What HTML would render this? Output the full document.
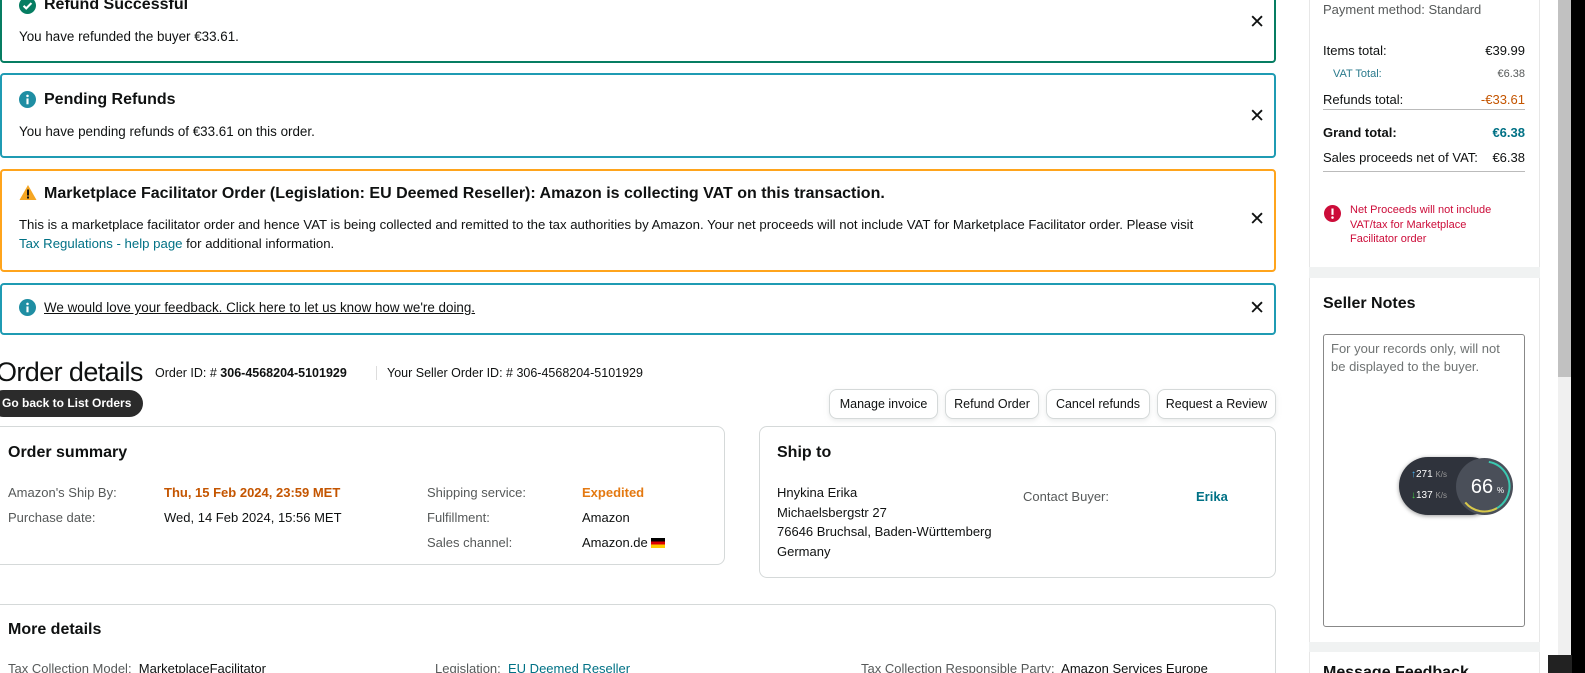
<!DOCTYPE html>
<html style="overflow:hidden;background:#000"><head><meta charset="utf-8"><style>
*{box-sizing:border-box;margin:0;padding:0}
body{width:1585px;height:673px;overflow:hidden;background:#fff;font-family:"Liberation Sans",sans-serif;color:#0f1111;font-size:13px;position:relative}
.a{position:absolute;white-space:nowrap}
.box{position:absolute;border:2px solid;border-radius:4px;background:#fff}
.x{position:absolute;right:9px;font-size:19px;color:#0f1111;line-height:1}
.h{font-weight:bold;font-size:16px}
.card{position:absolute;border:1px solid #d5d9d9;border-radius:8px;background:#fff}
.btn{position:absolute;top:389px;height:30px;border:1px solid #d5d9d9;border-radius:8px;background:#fff;font-size:12.5px;line-height:28px;text-align:center;box-shadow:0 2px 5px rgba(213,217,217,.5)}
.g{color:#565959}
.link{color:#007185}
.r{text-align:right}
.t{font-size:13.4px}
</style></head><body>

<!-- alerts -->
<div class="box" style="left:0;top:-8px;width:1276px;height:71px;border-color:#067d62">
 <svg class="a" style="left:17px;top:3px" width="17" height="17" viewBox="0 0 16 16"><circle cx="8" cy="8" r="8" fill="#067d62"/><path d="M4.3 8.3l2.5 2.4 4.9-5" stroke="#fff" stroke-width="2" fill="none"/></svg>
 <div class="a h" style="left:42px;top:2px">Refund Successful</div>
 <div class="a t" style="left:17px;top:35px">You have refunded the buyer €33.61.</div>
 <div class="x" style="top:19px">✕</div>
</div>
<div class="box" style="left:0;top:73px;width:1276px;height:85px;border-color:#1f9bb3">
 <svg class="a" style="left:17px;top:16px" width="17" height="17" viewBox="0 0 16 16"><circle cx="8" cy="8" r="8" fill="#1f8ea3"/><rect x="7" y="7" width="2" height="5.5" fill="#fff"/><circle cx="8" cy="4.6" r="1.2" fill="#fff"/></svg>
 <div class="a h" style="left:42px;top:16px">Pending Refunds</div>
 <div class="a t" style="left:17px;top:49px">You have pending refunds of €33.61 on this order.</div>
 <div class="x" style="top:32px">✕</div>
</div>
<div class="box" style="left:0;top:169px;width:1276px;height:103px;border-color:#ffa41c">
 <svg class="a" style="left:17px;top:13px" width="18" height="17" viewBox="0 0 18 16"><path d="M9 0.5L17.5 15.5H0.5Z" fill="#f5a623"/><rect x="8" y="5" width="2" height="6" fill="#111"/><rect x="8" y="12" width="2" height="2" fill="#111"/></svg>
 <div class="a h" style="left:42px;top:14px">Marketplace Facilitator Order (Legislation: EU Deemed Reseller): Amazon is collecting VAT on this transaction.</div>
 <div class="a" style="left:17px;top:46px;font-size:13.2px">This is a marketplace facilitator order and hence VAT is being collected and remitted to the tax authorities by Amazon. Your net proceeds will not include VAT for Marketplace Facilitator order. Please visit</div>
 <div class="a" style="left:17px;top:65px;font-size:13.2px"><span class="link">Tax Regulations - help page</span> for additional information.</div>
 <div class="x" style="top:39px">✕</div>
</div>
<div class="box" style="left:0;top:283px;width:1276px;height:52px;border-color:#1f9bb3">
 <svg class="a" style="left:17px;top:14px" width="17" height="17" viewBox="0 0 16 16"><circle cx="8" cy="8" r="8" fill="#1f8ea3"/><rect x="7" y="7" width="2" height="5.5" fill="#fff"/><circle cx="8" cy="4.6" r="1.2" fill="#fff"/></svg>
 <div class="a t" style="left:42px;top:15px;text-decoration:underline">We would love your feedback. Click here to let us know how we're doing.</div>
 <div class="x" style="top:14px">✕</div>
</div>

<!-- order details -->
<div class="a" style="left:-4px;top:355px;font-size:27px;line-height:34px;letter-spacing:-0.6px">Order details</div>
<div class="a" style="left:155px;top:366px;font-size:12.5px">Order ID: # <b>306-4568204-5101929</b></div>
<div class="a" style="left:376px;top:366px;height:14px;border-left:1px solid #ddd"></div>
<div class="a" style="left:387px;top:366px;font-size:12.5px">Your Seller Order ID: # 306-4568204-5101929</div>
<div class="a" style="left:-10px;top:390px;width:153px;height:27px;background:#2b2b2b;border-radius:14px;color:#fff;font-weight:bold;font-size:12px;line-height:27px;padding-left:12px">Go back to List Orders</div>

<div class="btn" style="left:829px;width:109px">Manage invoice</div>
<div class="btn" style="left:945px;width:94px">Refund Order</div>
<div class="btn" style="left:1046px;width:104px">Cancel refunds</div>
<div class="btn" style="left:1157px;width:119px">Request a Review</div>

<div class="card" style="left:-10px;top:426px;width:735px;height:139px"></div>
<div class="a h" style="left:8px;top:444px">Order summary</div>
<div class="a g" style="left:8px;top:485px">Amazon's Ship By:</div>
<div class="a" style="left:164px;top:485px;color:#c45500;font-weight:bold">Thu, 15 Feb 2024, 23:59 MET</div>
<div class="a g" style="left:8px;top:510px">Purchase date:</div>
<div class="a" style="left:164px;top:510px">Wed, 14 Feb 2024, 15:56 MET</div>
<div class="a g" style="left:427px;top:485px">Shipping service:</div>
<div class="a" style="left:582px;top:485px;color:#e47911;font-weight:bold">Expedited</div>
<div class="a g" style="left:427px;top:510px">Fulfillment:</div>
<div class="a" style="left:582px;top:510px">Amazon</div>
<div class="a g" style="left:427px;top:535px">Sales channel:</div>
<div class="a" style="left:582px;top:535px">Amazon.de <span style="display:inline-block;width:14px;height:10px;vertical-align:-1px;background:linear-gradient(#000 33%,#d00 33%,#d00 66%,#fc0 66%)"></span></div>

<div class="card" style="left:759px;top:426px;width:517px;height:152px"></div>
<div class="a h" style="left:777px;top:444px">Ship to</div>
<div class="a" style="left:777px;top:483px;line-height:19.5px">Hnykina Erika<br>Michaelsbergstr 27<br>76646 Bruchsal, Baden-Württemberg<br>Germany</div>
<div class="a g" style="left:1023px;top:489px">Contact Buyer:</div>
<div class="a" style="left:1196px;top:489px;color:#007185;font-weight:bold">Erika</div>

<div class="card" style="left:-10px;top:604px;width:1286px;height:100px"></div>
<div class="a h" style="left:8px;top:621px">More details</div>
<div class="a" style="left:8px;top:661px"><span class="g" style="text-decoration:underline">Tax Collection Model:</span>&nbsp; MarketplaceFacilitator</div>
<div class="a" style="left:435px;top:661px"><span class="g">Legislation:</span>&nbsp; <span class="link">EU Deemed Reseller</span></div>
<div class="a" style="left:861px;top:661px"><span class="g">Tax Collection Responsible Party:</span>&nbsp; Amazon Services Europe</div>

<!-- right column -->
<div class="a" style="left:1290px;top:0;width:268px;height:673px;background:#fff"></div>
<div class="a" style="left:1309px;top:0;width:1px;height:673px;background:#e7e7e7"></div>
<div class="a" style="left:1539px;top:0;width:1px;height:673px;background:#e7e7e7"></div>
<div class="a" style="left:1309px;top:267px;width:231px;height:11px;background:#f0f2f2"></div>
<div class="a" style="left:1309px;top:642px;width:231px;height:10px;background:#f0f2f2"></div>
<div class="a" style="left:1558px;top:0;width:14px;height:673px;background:#f0f0f0"></div>
<div class="a" style="left:1558px;top:0;width:13px;height:377px;background:#c1c1c1"></div>
<div style="position:fixed;left:1571px;top:0;width:20px;height:700px;background:#000"></div>
<div class="a" style="left:1548px;top:655px;width:24px;height:18px;background:#222"></div>

<div class="a g" style="left:1323px;top:2px">Payment method: Standard</div>
<div class="a" style="left:1323px;top:43px">Items total:</div>
<div class="a r" style="left:1423px;width:102px;top:43px">€39.99</div>
<div class="a" style="left:1333px;top:68px;font-size:11px;color:#2a7a8c">VAT Total:</div>
<div class="a r g" style="left:1423px;width:102px;top:68px;font-size:11px">€6.38</div>
<div class="a" style="left:1323px;top:92px">Refunds total:</div>
<div class="a r" style="left:1423px;width:102px;top:92px;color:#c45500">-€33.61</div>
<div class="a" style="left:1323px;top:109px;width:202px;height:1px;background:#bbb"></div>
<div class="a" style="left:1323px;top:125px;font-weight:bold">Grand total:</div>
<div class="a r" style="left:1423px;width:102px;top:125px;font-weight:bold;color:#007185">€6.38</div>
<div class="a" style="left:1323px;top:150px">Sales proceeds net of VAT:</div>
<div class="a r" style="left:1463px;width:62px;top:150px">€6.38</div>
<div class="a" style="left:1323px;top:171px;width:202px;height:1px;background:#bbb"></div>
<svg class="a" style="left:1324px;top:205px" width="17" height="17" viewBox="0 0 16 16"><circle cx="8" cy="8" r="8" fill="#cc0c39"/><rect x="7" y="3.3" width="2" height="6" fill="#fff"/><circle cx="8" cy="11.8" r="1.2" fill="#fff"/></svg>
<div class="a" style="left:1350px;top:203px;font-size:11px;line-height:14.5px;color:#cc0c39">Net Proceeds will not include<br>VAT/tax for Marketplace<br>Facilitator order</div>

<div class="a h" style="left:1323px;top:295px">Seller Notes</div>
<div class="a" style="left:1323px;top:334px;width:202px;height:293px;border:1px solid #888;border-radius:3px;padding:5px 7px;white-space:normal;color:#6f7373;line-height:18px">For your records only, will not be displayed to the buyer.</div>
<div class="a" style="left:1323px;top:664px;font-weight:bold;font-size:16px">Message Feedback</div>

<!-- widget -->
<div class="a" style="left:1399px;top:457px;width:100px;height:58px;border-radius:29px;background:#2f333c;box-shadow:0 1px 4px rgba(0,0,0,.4)"></div>
<div class="a" style="left:1411px;top:469px;font-size:10px;color:#fff"><span style="color:#4ab3f4">↑</span>271 <span style="color:#999;font-size:8px">K/s</span></div>
<div class="a" style="left:1411px;top:490px;font-size:10px;color:#fff"><span style="color:#4c4">↓</span>137 <span style="color:#999;font-size:8px">K/s</span></div>
<svg class="a" style="left:1455px;top:457px" width="59" height="59" viewBox="0 0 59 59"><circle cx="29.5" cy="29.5" r="28.5" fill="#4a4f59"/><circle cx="29.5" cy="29.5" r="25" fill="none" stroke="#3ac8b0" stroke-width="2" stroke-dasharray="70 200" transform="rotate(-80 29.5 29.5)"/><circle cx="29.5" cy="29.5" r="25" fill="none" stroke="#d8c84a" stroke-width="2" stroke-dasharray="35 200" transform="rotate(60 29.5 29.5)"/><text x="27" y="36" font-size="20" fill="#fff" text-anchor="middle" font-family="Liberation Sans">66</text><text x="42" y="36" font-size="8" fill="#fff" font-family="Liberation Sans">%</text></svg>
</body></html>
